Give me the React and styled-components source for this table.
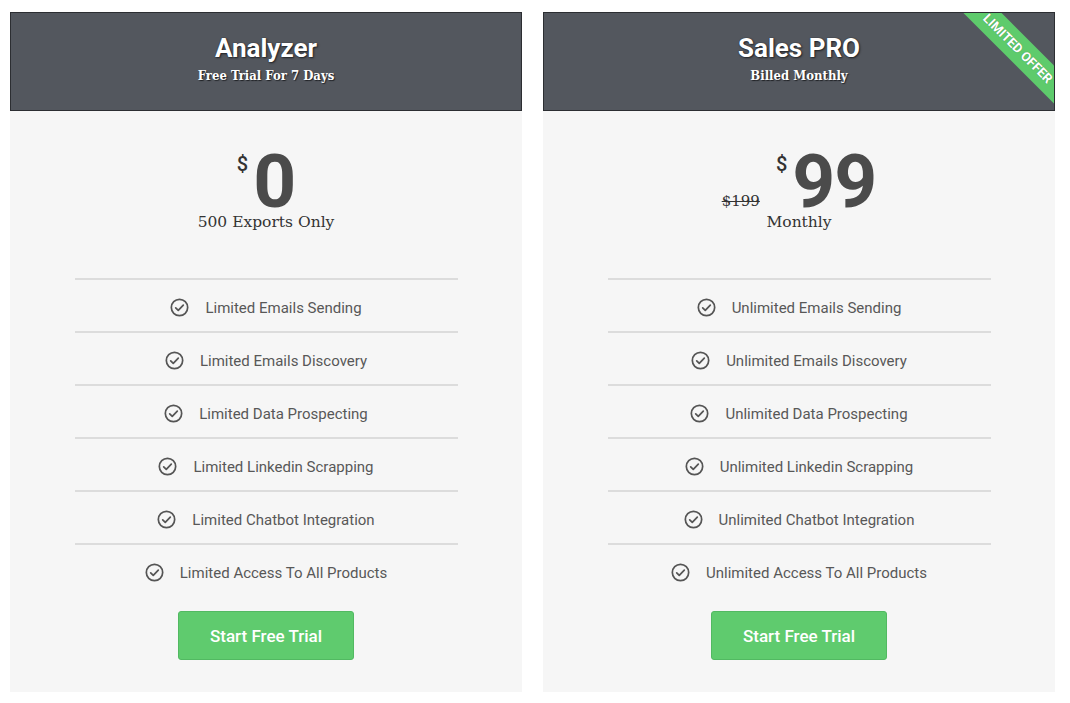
import React from "react";
import styled, { createGlobalStyle } from "styled-components";

const Global = createGlobalStyle`
  html, body { margin: 0; padding: 0; background: #ffffff; }
  body { font-family: Roboto, "Noto Sans", sans-serif; }
  * { box-sizing: border-box; }
`;

const Page = styled.div`
  display: flex;
  gap: 21px;
  padding: 12px 15px 0 10px;
`;

const Card = styled.section`
  width: 512px;
  background: #f6f6f6;
  display: flex;
  flex-direction: column;
  align-items: center;
  padding-bottom: 32px;
`;

const Header = styled.header`
  position: relative;
  overflow: hidden;
  width: 100%;
  height: 99px;
  background: #53575e;
  border: 1px solid #2c2e32;
  display: flex;
  flex-direction: column;
  align-items: center;
  padding-top: 20px;
  color: #fff;
`;

const Title = styled.h2`
  margin: 0;
  font-family: Roboto, sans-serif;
  font-weight: 700;
  font-size: 26px;
  line-height: 31px;
  text-shadow: 1px 1px 2px #1f2125, 0 0 1px #1f2125;
`;

const Subtitle = styled.div`
  font-family: "DejaVu Serif", serif;
  font-stretch: condensed;
  font-weight: 700;
  font-size: 13px;
  line-height: 18px;
  margin-top: 3px;
  text-shadow: 1px 1px 1px #1f2125;
`;

const Ribbon = styled.div`
  position: absolute;
  top: 22px;
  right: -44px;
  width: 160px;
  height: 27px;
  background: #5ecb6c;
  transform: rotate(45deg);
  display: flex;
  align-items: center;
  justify-content: center;
  font-family: Roboto, sans-serif;
  font-weight: 700;
  font-size: 13px;
  color: #fff;
  text-transform: uppercase;
  text-shadow: 0 0 1px rgba(0,0,0,0.35);
`;

const PriceRow = styled.div`
  display: flex;
  align-items: flex-start;
  margin-top: 40px;
  height: 60px;
  color: #4b4b4b;
`;

const OldPrice = styled.span`
  align-self: flex-end;
  font-family: "DejaVu Serif", serif;
  font-size: 15px;
  line-height: 18px;
  color: #333;
  text-decoration: line-through;
  margin-right: 16px;
  margin-bottom: 1px;
`;

const Currency = styled.span`
  font-family: Roboto, sans-serif;
  font-weight: 500;
  font-size: 20px;
  line-height: 20px;
  margin-top: 3px;
  margin-right: 5px;
  color: #333;
`;

const Amount = styled.span`
  font-family: Roboto, sans-serif;
  font-weight: 700;
  font-size: 75px;
  line-height: 60px;
  letter-spacing: -1px;
`;

const Period = styled.div`
  font-family: "DejaVu Serif", serif;
  font-size: 15.5px;
  line-height: 20px;
  color: #333;
  margin-top: 1px;
`;

const Features = styled.ul`
  list-style: none;
  margin: 46px 0 0;
  padding: 0;
  width: 383px;
`;

const Feature = styled.li`
  height: 53px;
  border-top: 2px solid #dcdcdc;
  display: flex;
  align-items: center;
  justify-content: center;
  gap: 16px;
  padding-top: 4px;
  font-family: Roboto, sans-serif;
  font-size: 15px;
  color: #585858;
`;

const CheckIcon = styled.svg`
  width: 19px;
  height: 19px;
  flex: none;
`;

const Button = styled.button`
  margin-top: 15px;
  width: 176px;
  height: 49px;
  border: 1px solid #52b962;
  border-radius: 3px;
  background: #5fcb6e;
  color: #fff;
  font-family: Roboto, sans-serif;
  font-weight: 500;
  font-size: 17px;
  cursor: pointer;
`;

const Check = () => (
  <CheckIcon viewBox="0 0 20 20" fill="none" stroke="#555" strokeWidth="1.8">
    <circle cx="10" cy="10" r="8.6" />
    <path d="M6 10.3l2.7 2.7 5.3-5.5" strokeLinecap="round" strokeLinejoin="round" />
  </CheckIcon>
);

const plans = [
  {
    title: "Analyzer",
    subtitle: "Free Trial For 7 Days",
    amount: "0",
    period: "500 Exports Only",
    prefix: "Limited",
  },
  {
    title: "Sales PRO",
    subtitle: "Billed Monthly",
    amount: "99",
    old: "$199",
    period: "Monthly",
    prefix: "Unlimited",
    ribbon: "Limited Offer",
  },
];

const items = [
  "Emails Sending",
  "Emails Discovery",
  "Data Prospecting",
  "Linkedin Scrapping",
  "Chatbot Integration",
  "Access To All Products",
];

export default function App() {
  return (
    <>
      <Global />
      <Page>
        {plans.map((p) => (
          <Card key={p.title}>
            <Header>
              <Title>{p.title}</Title>
              <Subtitle>{p.subtitle}</Subtitle>
              {p.ribbon && <Ribbon>{p.ribbon}</Ribbon>}
            </Header>
            <PriceRow>
              {p.old && <OldPrice>{p.old}</OldPrice>}
              <Currency>$</Currency>
              <Amount>{p.amount}</Amount>
            </PriceRow>
            <Period>{p.period}</Period>
            <Features>
              {items.map((it) => (
                <Feature key={it}>
                  <Check />
                  <span>
                    {p.prefix} {it}
                  </span>
                </Feature>
              ))}
            </Features>
            <Button>Start Free Trial</Button>
          </Card>
        ))}
      </Page>
    </>
  );
}
